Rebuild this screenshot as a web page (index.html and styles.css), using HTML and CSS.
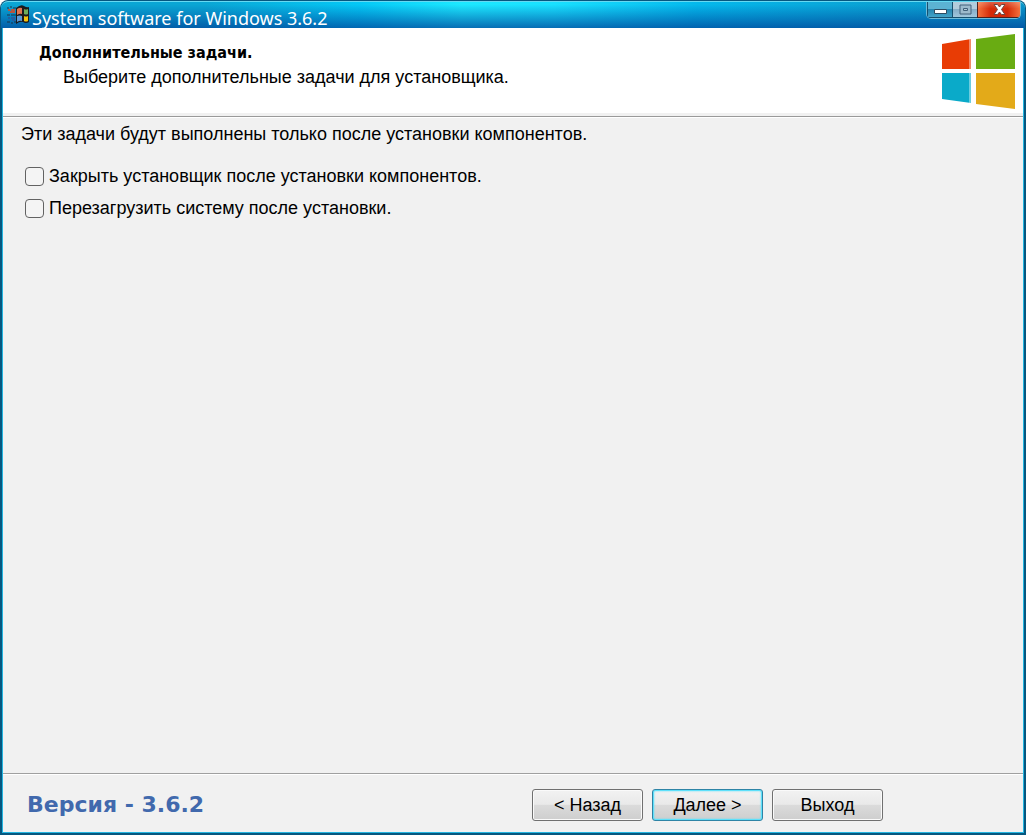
FILE: index.html
```html
<!DOCTYPE html>
<html lang="ru">
<head>
    <meta charset="UTF-8">
    <meta name="viewport" content="width=device-width, initial-scale=1.0">
    <title>System software for Windows 3.6.2</title>
    <link rel="stylesheet" href="styles.css">
</head>
<body>
    <div class="window">
        <header class="titlebar">
            <svg class="app-icon" width="24" height="20" viewBox="0 0 24 20" aria-hidden="true">
                <path d="M9 4Q14 0 17 2Q20 4 22 3V18Q19 20 16 18Q13 17 9 20Z" fill="#1b1a1c"/>
                <path d="M10 5Q13 3 15 4V10Q13 9 10 11Z" fill="#e0764f"/>
                <path d="M17 5Q19 6 21 5V10Q19 11 17 10Z" fill="#6fac5a"/>
                <path d="M10 12Q13 11 15 12V17Q13 16 10 18Z" fill="#5d9ad4"/>
                <path d="M17 12Q19 13 21 12V17Q19 18 17 17Z" fill="#f4c20d"/>
                <path d="M0 4H2M3 3H5M6 4H9M0 11H3M4 11H9M0 18H3M4 19H6M7 18H9" stroke="#1c3548"/>
                <path d="M1 6H3M4 6H8M3 8H8" stroke="#b5563f" stroke-width="2"/>
                <path d="M1 14H3M4 14H8M5 16H8" stroke="#245ea0" stroke-width="2"/>
            </svg>
            <span class="title">System software for Windows 3.6.2</span>
            <div class="controls">
                <button class="control" aria-label="Свернуть">
                    <svg class="minimize-icon" width="13" height="5" viewBox="0 0 13 5"><path d="M.5 .5H12.500V4.500H.5Z" fill="#fff" stroke="#2d4c62"/></svg>
                </button>
                <button class="control maximize" aria-label="Развернуть" disabled>
                    <svg width="13" height="11" viewBox="0 0 13 11"><path d="M1 1H12V10H1Z" fill="#9dbacc" stroke="#42617a"/><path d="M4.500 4.500H8.500V6.500H4.500Z" fill="#b4c9d8" stroke="#42617a"/></svg>
                </button>
                <button class="control close" aria-label="Закрыть">
                    <svg width="13" height="11" viewBox="0 0 13 11"><path d="M1 .5H4.500L6.500 3L8.500 .5H12L8.500 5.500L12 10.500H8.500L6.500 8L4.500 10.500H1L4.500 5.500Z" fill="#fff" stroke="#70453f"/></svg>
                </button>
            </div>
        </header>
        <main class="client">
            <section class="banner">
                <div class="banner-text">
                    <h1>Дополнительные задачи.</h1>
                    <p>Выберите дополнительные задачи для установщика.</p>
                </div>
                <svg class="logo" width="74" height="76" viewBox="0 0 74 76" aria-hidden="true">
                    <path d="M0 10L29 5V35H0Z" fill="#e83c05"/>
                    <path d="M34 5L73 0V35H34Z" fill="#69ac12"/>
                    <path d="M0 39H29V69L0 65Z" fill="#0aaac9"/>
                    <path d="M34 39H73V75L34 70Z" fill="#e3aa19"/>
                    <path d="M28 5V35M28 39V69" stroke="#fff" stroke-opacity=".4" stroke-width="2"/>
                </svg>
            </section>
            <section class="tasks">
                <p>Эти задачи будут выполнены только после установки компонентов.</p>
                <label class="task"><input type="checkbox">Закрыть установщик после установки компонентов.</label>
                <label class="task"><input type="checkbox">Перезагрузить систему после установки.</label>
            </section>
            <footer class="footer">
                <span class="version">Версия - 3.6.2</span>
                <div class="buttons">
                    <button class="btn">&lt; Назад</button>
                    <button class="btn default">Далее &gt;</button>
                    <button class="btn">Выход</button>
                </div>
            </footer>
        </main>
    </div>
</body>
</html>
```
FILE: styles.css
```css
* {
    box-sizing: border-box;
}
body {
    margin: 0;
    background: #fff;
    color: #000;
    font: 18px/24px "Liberation Sans", Arial, sans-serif;
}
h1, p {
    margin: 0;
}
.window {
    display: flex;
    flex-direction: column;
    min-height: 100vh;
    padding: 1px;
    background: #06577f;
    border-radius: 8px 8px 0 0;
}
/* Title bar */
.titlebar {
    display: flex;
    height: 27px;
    padding-left: 6px;
    border-top: 1px solid #66d9f2;
    border-radius: 7px 7px 0 0;
    background:
        linear-gradient(transparent 10%, rgba(0, 70, 155, 0.75)),
        linear-gradient(90deg, #0aa6d4 0%, #0aa6d4 20%, #04c8f6 35%, #1de8ff 45%, #19e0ff 54%, #04b8ec 68%, #0aa2d4 85%, #0997cb 100%);
}
.app-icon {
    margin-top: 2px;
}
.title {
    flex: 1;
    padding-left: 1px;
    color: #fff;
    font: 18px/32px "Noto Sans", "Open Sans", sans-serif;
    white-space: nowrap;
}
.controls {
    display: flex;
    height: 17px;
    margin-right: 4px;
    border: 1px solid #6dbbd9;
    border-top: 0;
    border-radius: 0 0 5px 5px;
    overflow: hidden;
}
.control {
    display: flex;
    align-items: center;
    justify-content: center;
    width: 25px;
    padding: 0;
    border: 1px solid #17506f;
    border-width: 0 0 1px 1px;
    background: linear-gradient(#5cb2d2 45%, #2686b0 50%, #43a3c8);
}
.minimize-icon {
    margin-top: 3px;
}
.control.maximize {
    background: linear-gradient(#b2ccdc 45%, #86aec8 50%, #a0c6dc);
}
.control.close {
    width: 43px;
    border-color: #4a2020;
    background: linear-gradient(rgba(255, 255, 255, 0.25), transparent 45%), linear-gradient(90deg, #f4703c, #d42a08 30%, #d42a08 70%, #f4703c);
}
/* Client area */
.client {
    display: flex;
    flex: 1;
    flex-direction: column;
    margin: 0 1px 1px;
    border: 1px solid #24b5e0;
    border-top: 0;
    background: #f1f1f1;
}
.banner {
    display: flex;
    align-items: flex-start;
    justify-content: space-between;
    height: 89px;
    padding: 6px 7px 0 36px;
    border-bottom: 1px solid #9a9a9a;
    background: linear-gradient(#fff 85px, #f1f1f1 85px);
}
.banner-text {
    padding-top: 7px;
}
.banner h1 {
    font: bold 16px/24px "DejaVu Sans Condensed", Tahoma, sans-serif;
}
.banner p {
    padding-left: 24px;
}
.tasks {
    display: flex;
    flex: 1;
    flex-direction: column;
    gap: 8px;
    padding: 4px 18px;
    border-top: 1px solid #fff;
}
.tasks p {
    margin-bottom: 10px;
}
.task {
    display: flex;
    align-items: center;
    align-self: flex-start;
    gap: 5px;
    padding-left: 4px;
}
.task input {
    appearance: none;
    width: 19px;
    height: 19px;
    margin: 1px 0 0;
    border: 1px solid #626262;
    border-radius: 4px;
    background: #f4f4f4;
}
.task input:checked {
    background: #2380b5;
}
.footer {
    display: flex;
    align-items: center;
    justify-content: space-between;
    height: 59px;
    padding: 3px 140px 0 24px;
    border-top: 1px solid #a0a0a0;
    box-shadow: inset 0 1px #fff;
}
.version {
    color: #4169ad;
    font: bold 22px/28px "DejaVu Sans", Verdana, sans-serif;
}
.buttons {
    display: flex;
    gap: 9px;
}
.btn {
    width: 111px;
    height: 32px;
    padding: 0;
    border: 1px solid #707070;
    border-radius: 3px;
    box-shadow: inset 0 0 0 1px #fafafa;
    background: linear-gradient(#f2f2f2, #e9e9e9 48%, #dbdbdb 50%, #cecece);
    color: #000;
    font: inherit;
}
.btn.default {
    border-color: #2e84a6;
    box-shadow: inset 0 0 0 1px #5ee0fa, inset 0 0 2px 1px #5ee0fa;
}
```
